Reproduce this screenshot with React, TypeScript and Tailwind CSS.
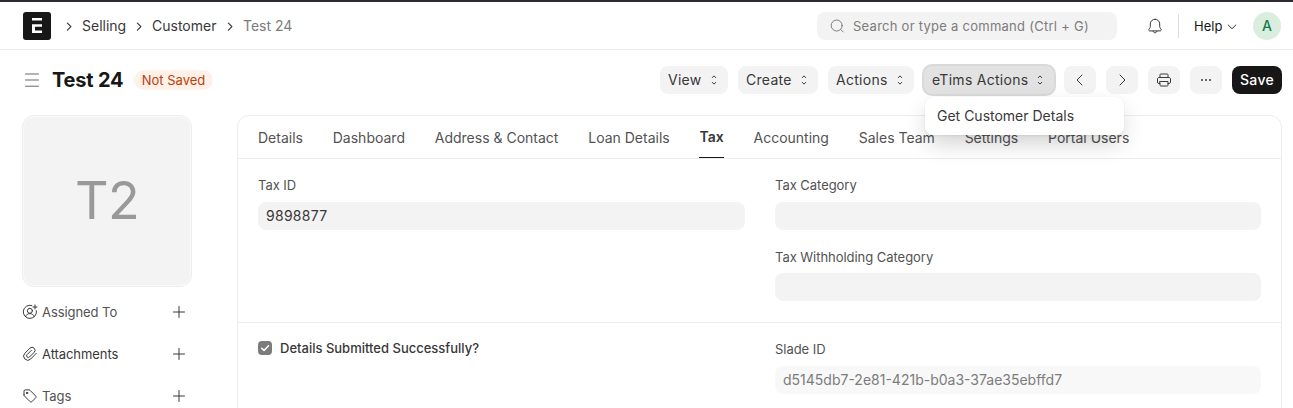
import type { ReactNode } from 'react';

type IconProps = { className?: string };

const Selector = () => (
  <svg className="size-4 shrink-0" viewBox="0 0 16 16" fill="none" stroke="#383838" strokeLinecap="round" strokeLinejoin="round">
    <path d="M6.3 5.6 8 3.9 9.7 5.6M6.3 10.4 8 12.1 9.7 10.4" />
  </svg>
);

const Chevron = ({ className }: IconProps) => (
  <svg className={className} viewBox="0 0 8 12" fill="none" stroke="#383838" strokeWidth="1.2" strokeLinecap="round" strokeLinejoin="round">
    <path d="M2.4 3.2 5.9 6.7 2.4 10.2" />
  </svg>
);

const Plus = () => (
  <svg className="size-4" viewBox="0 0 16 16" fill="none" stroke="#383838" strokeLinecap="round">
    <path d="M8 2.5v11M2.5 8h11" />
  </svg>
);

const AssignIcon = () => (
  <svg className="-ml-px size-4" viewBox="0 0 16 16" fill="none" stroke="#383838" strokeLinecap="round" strokeLinejoin="round">
    <path d="M9.8 1.5A6.6 6.6 0 1 0 14.4 6.7M3.6 12.6c.6-1.9 2.2-3 4.3-3s3.7 1.1 4.3 3M13 1v4M11 3h4" />
    <circle cx="7.9" cy="6.8" r="2.5" />
  </svg>
);

const ClipIcon = () => (
  <svg className="-ml-px size-4" viewBox="0 0 16 16" fill="none" stroke="#383838" strokeLinecap="round" strokeLinejoin="round">
    <path d="M14.3 7.3 8.700 13a4.100 4.100 0 0 1-5.800 0 4.100 4.100 0 0 1 0-5.800l5-5a2.900 2.900 0 0 1 4.200 0 2.900 2.900 0 0 1 0 4.200L7.500 11a1.650 1.650 0 0 1-2.400 0 1.650 1.650 0 0 1 0-2.400l4.200-4.200" />
  </svg>
);

const TagIcon = () => (
  <svg className="-ml-px size-4" viewBox="0 0 16 16" fill="none" stroke="#383838" strokeLinecap="round" strokeLinejoin="round">
    <path d="M2 6.9V3.1c0-.7.5-1.2 1.2-1.2H7c.4 0 .7.1 1 .4l5.7 5.7c.5.5.5 1.3 0 1.8L9.9 13.7c-.5.5-1.3.5-1.800 0L2.400 7.900c-.3-.3-.4-.6-.4-1Z" />
    <circle cx="5" cy="5" r=".7" fill="#383838" />
  </svg>
);

const PrinterIcon = () => (
  <svg className="size-4" viewBox="0 0 16 16" fill="none" stroke="#383838" strokeLinecap="round" strokeLinejoin="round">
    <path d="M4 5.5V2.8c0-.5.3-.8.8-.8h6.400c.5 0 .8.3.8.8v2.700M4 11.500H2.900A1.400 1.400 0 0 1 1.500 10.100V7c0-.9.6-1.500 1.500-1.500h10c.9 0 1.500.6 1.500 1.500v3.100c0 .8-.6 1.400-1.400 1.400H12" />
    <path d="M4 9.500h8v3.700c0 .5-.3.800-.8.800H4.800c-.5 0-.8-.3-.8-.8Z" />
  </svg>
);

const MenuButton = ({ label, className }: { label: string; className: string }) => (
  <button className={`flex h-7 items-center justify-between rounded-lg pl-2 pr-1.5 tracking-[0.02em] ${className}`}>
    <span>{label}</span>
    <Selector />
  </button>
);

const IconButton = ({ children }: { children: ReactNode }) => (
  <button className="flex h-7 w-8 items-center justify-center rounded-lg bg-[#f3f3f3]">{children}</button>
);

const SideRow = ({ icon, label, className }: { icon: ReactNode; label: string; className: string }) => (
  <div className="flex h-[42px] items-center">
    {icon}
    <span className={`ml-1 flex-1 pt-px text-[13px] tracking-[-0.005em] ${className}`}>{label}</span>
    <Plus />
  </div>
);

const Label = ({ children }: { children: string }) => (
  <div className="h-5 text-[13px] leading-5 tracking-[-0.003em] text-[#525252]">{children}</div>
);

const tabs = ['Details', 'Dashboard', 'Address & Contact', 'Loan Details', 'Tax', 'Accounting', 'Sales Team', 'Settings', 'Portal Users'];

export default function App() {
  return (
    <div className="h-[408px] w-[1293px] overflow-hidden border-t-2 border-[#2d2b32] bg-white font-['Inter',sans-serif] text-sm font-[420] text-[#383838]">
      <header className="flex h-12 items-center border-b border-[#ededed] pl-[23px] pr-3">
        <svg className="size-7" viewBox="0 0 28 28">
          <rect width="28" height="28" rx="3" fill="#171717" />
          <path fill="#fff" d="M9 6h10v2.600H9zM9 12.200h10v2.500h-7v3.700h7V21H9z" />
        </svg>
        <nav className="flex items-center">
          <Chevron className="ml-[14px] h-3 w-2" />
          <span className="ml-[9px] w-[45px] whitespace-nowrap">Selling</span>
          <Chevron className="ml-2 h-3 w-2" />
          <span className="ml-[9px] w-[65px] whitespace-nowrap">Customer</span>
          <Chevron className="ml-[9px] h-3 w-2" />
          <span className="ml-[9px] whitespace-nowrap text-[#7c7c7c]">Test 24</span>
        </nav>
        <div className="ml-auto flex h-7 w-[300px] items-center rounded-lg bg-[#f3f3f3] pl-3 text-[13px] tracking-[0.02em] text-[#7c7c7c]">
          <svg className="size-4" viewBox="0 0 16 16" fill="none" stroke="#7c7c7c" strokeLinecap="round">
            <circle cx="7.700" cy="7.500" r="5.500" />
            <path d="m11.700 11.500 2.500 2.500" />
          </svg>
          <span className="ml-2 pt-px">Search or type a command (Ctrl + G)</span>
        </div>
        <svg className="ml-[30px] size-4" viewBox="0 0 16 16" fill="none" stroke="#383838" strokeLinecap="round" strokeLinejoin="round">
          <path d="M8 1.300c-2.700 0-4.700 2-4.700 4.600v2.700c0 .8-.4 1.300-.9 2-.5.600-.8 1.200-.5 1.800.2.400.6.500 1 .5h10.200c.4 0 .8-.1 1-.5.3-.6 0-1.200-.5-1.800-.5-.7-.9-1.200-.9-2V5.900C12.700 3.300 10.700 1.300 8 1.300ZM6.200 13.200c.1 1 .7 1.500 1.800 1.500s1.700-.5 1.800-1.500" />
        </svg>
        <div className="ml-[15px] h-6 w-px bg-[#dedede]" />
        <div className="ml-[15px] flex items-center text-[13px] text-[#171717]">
          <span className="w-[30px] pt-px">Help</span>
          <svg className="ml-0.5 size-3" viewBox="0 0 12 12" fill="none" stroke="#383838" strokeLinecap="round" strokeLinejoin="round">
            <path d="M2.2 5 6 8.7 9.8 5" />
          </svg>
        </div>
        <div className="ml-[15px] flex size-7 items-center justify-center rounded-full bg-[#daeee0] text-sm font-medium text-[#16794c]">A</div>
      </header>

      <div className="flex h-[65px] items-start pl-[23px] pr-[11px] pt-4">
        <div className="flex h-7 items-center">
          <svg className="h-4 w-[17px]" viewBox="0 0 17 16" stroke="#6b6b6b" strokeLinecap="round">
            <path d="M2.500 2h13M2.500 8h13M2.500 14.200h13" />
          </svg>
          <h1 className="ml-3 w-[72px] whitespace-nowrap text-xl font-bold tracking-[-0.01em] text-[#171717]">Test 24</h1>
          <span className="ml-[10px] flex h-5 w-[79px] items-center justify-center whitespace-nowrap rounded-full bg-[#fff1e7] text-[13px] text-[#bd3e0c]">Not Saved</span>
        </div>
        <div className="ml-auto flex gap-2.5 whitespace-nowrap">
          <MenuButton label="View" className="w-[68px] bg-[#f3f3f3]" />
          <MenuButton label="Create" className="w-20 bg-[#f3f3f3]" />
          <MenuButton label="Actions" className="w-[86px] bg-[#f3f3f3]" />
          <div className="relative">
            <MenuButton label="eTims Actions" className="w-[130px] bg-[#e2e2e2] ring-2 ring-[#d9d9d9]" />
            <div className="absolute left-[0.5px] top-[31px] z-10 flex h-[38px] w-[199px] items-center rounded-lg bg-white pl-[12.5px] shadow-[0_0_1px_rgba(0,0,0,0.08),0_1px_2px_rgba(0,0,0,0.05),0_10px_24px_-3px_rgba(0,0,0,0.2)]">
              Get Customer Detals
            </div>
          </div>
          <IconButton>
            <svg className="size-4" viewBox="0 0 16 16" fill="none" stroke="#383838" strokeLinecap="round" strokeLinejoin="round"><path d="M10 3 5 8l5 5" /></svg>
          </IconButton>
          <IconButton>
            <svg className="size-4" viewBox="0 0 16 16" fill="none" stroke="#383838" strokeLinecap="round" strokeLinejoin="round"><path d="m6 3 5 5-5 5" /></svg>
          </IconButton>
          <IconButton><PrinterIcon /></IconButton>
          <IconButton>
            <svg className="size-4" viewBox="0 0 16 16" fill="#383838"><circle cx="4" cy="8" r="1" /><circle cx="8" cy="8" r="1" /><circle cx="12" cy="8" r="1" /></svg>
          </IconButton>
          <button className="h-7 w-[50px] rounded-lg bg-[#171717] font-medium tracking-[0.02em] text-white">Save</button>
        </div>
      </div>

      <div className="flex items-start pl-[22px]">
        <aside className="w-[170px]">
          <div className="flex h-[172px] items-center justify-center rounded-xl border border-[#ededed] bg-[#fafafa] p-px">
            <div className="flex size-full items-center justify-center rounded-[10px] bg-[#f3f3f3] text-[52px] font-[420] tracking-[-0.01em] text-[#999]">T2</div>
          </div>
          <div className="pl-px pr-[5px] pt-1">
            <SideRow icon={<AssignIcon />} label="Assigned To" className="text-[#525252]" />
            <SideRow icon={<ClipIcon />} label="Attachments" className="text-[#383838]" />
            <SideRow icon={<TagIcon />} label="Tags" className="text-[#525252]" />
          </div>
        </aside>

        <main className="ml-[45px] h-[320px] w-[1045px] rounded-t-xl border border-[#ededed]">
          <div className="flex h-[43px] gap-[29.8px] whitespace-nowrap border-b border-[#ededed] pl-5 text-[#525252]">
            {tabs.map((tab) =>
              tab === 'Tax' ? (
                <div key={tab} className="flex h-[42px] items-center border-b border-[#171717] font-semibold text-[#383838]">{tab}</div>
              ) : (
                <div key={tab} className="flex h-11 items-center">{tab}</div>
              ),
            )}
          </div>
          <section className="grid h-[164px] grid-cols-[487px_486px] gap-x-[30px] border-b border-[#ededed] pl-5 pt-4">
            <div>
              <Label>Tax ID</Label>
              <div className="mt-[7px] flex h-7 items-center rounded-lg bg-[#f3f3f3] px-2 tracking-[0.02em]">9898877</div>
            </div>
            <div>
              <Label>Tax Category</Label>
              <div className="mt-[7px] h-7 rounded-lg bg-[#f3f3f3]" />
              <div className="mt-[17px]"><Label>Tax Withholding Category</Label></div>
              <div className="mt-1.5 h-7 rounded-lg bg-[#f3f3f3]" />
            </div>
          </section>
          <section className="grid grid-cols-[487px_486px] gap-x-[30px] pl-5 pt-4">
            <div className="mt-px flex h-4 items-center text-[13px] font-medium">
              <svg className="mr-2 size-3.5" viewBox="0 0 14 14">
                <rect width="14" height="14" rx="4" fill="#7c7c7c" />
                <path d="m3.700 7.200 2.300 2.200 4.500-4.700" fill="none" stroke="#fff" strokeWidth="1.500" strokeLinecap="round" strokeLinejoin="round" />
              </svg>
              Details Submitted Successfully?
            </div>
            <div>
              <Label>Slade ID</Label>
              <div className="mt-[7px] flex h-7 items-center rounded-lg bg-[#f8f8f8] px-2 text-[#7c7c7c]">d5145db7-2e81-421b-b0a3-37ae35ebffd7</div>
            </div>
          </section>
        </main>
      </div>
    </div>
  );
}
